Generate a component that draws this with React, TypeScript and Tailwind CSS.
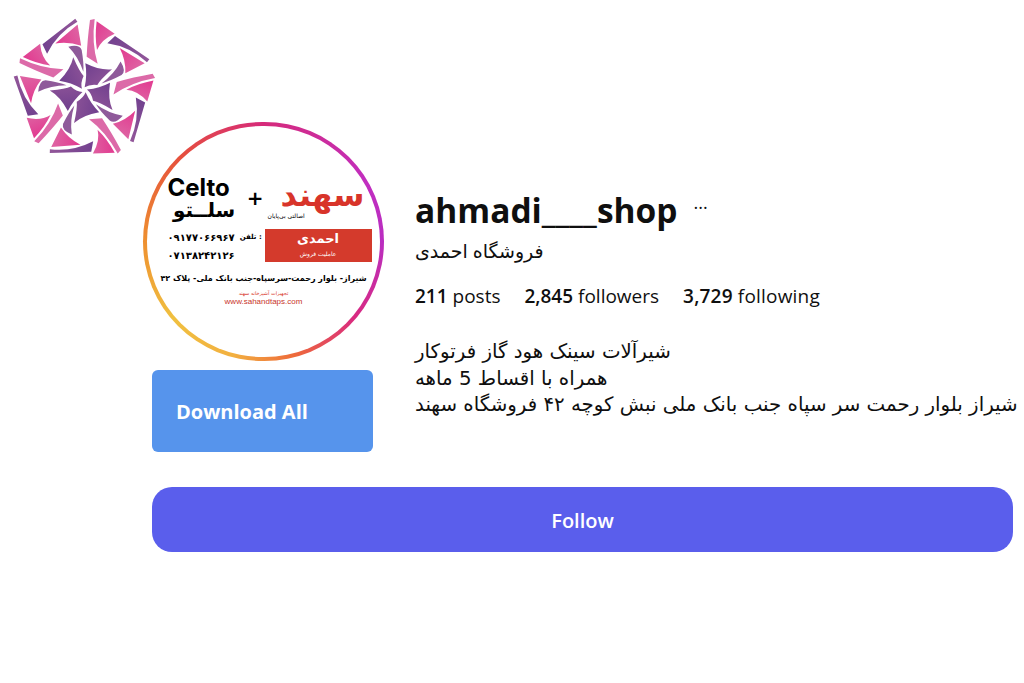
function Logo() {
  return (
    <svg viewBox="0 0 510 510" className="absolute left-0 top-0 w-[170px] h-[170px]">
      <defs>
        <linearGradient id="pk" x1="0" y1="0" x2="1" y2="1">
          <stop offset="0" stopColor="#e2388f" />
          <stop offset="1" stopColor="#dd6fa8" />
        </linearGradient>
        <linearGradient id="pp" x1="0" y1="0" x2="1" y2="1">
          <stop offset="0" stopColor="#6f3f8e" />
          <stop offset="1" stopColor="#94589a" />
        </linearGradient>
      </defs>
      {[0, 1, 2, 3, 4].map((i) => (
        <g key={i} transform={`rotate(${i * 72} 253 270)`}>
          <path d="M270 60 L284 57 Q274 130 293 191 L260 170 Q262 120 270 60Z" fill="#dc6aa8" />
          <path d="M290 64 L344 101 Q304 118 291 150 Q284 110 290 64Z" fill="url(#pk)" />
          <path d="M345 108 L448 178 L441 187 Q390 140 322 130Z" fill="url(#pp)" />
          <path d="M359 144 L434 190 L376 220 Q378 180 359 144Z" fill="url(#pk)" />
          <path d="M254 262 Q262 225 256 190 Q300 212 336 208 Q300 240 292 255 Q270 252 254 262Z" fill="url(#pp)" />
          <path d="M205 140 Q238 132 245 150 Q252 190 250 215 Q235 170 205 140Z" fill="#8f5a9a" />
        </g>
      ))}
      <circle cx="253" cy="270" r="5" fill="#fff" />
    </svg>
  );
}

function Avatar() {
  return (
    <div className="w-[241px] h-[239px] rounded-full p-1 bg-[conic-gradient(#d62a7a,#c12ec0_60deg,#b92dc0_90deg,#d92a80_130deg,#ee6a3a_165deg,#f2b040_195deg,#f0c040_230deg,#ee9030_270deg,#e6503c_315deg,#d62a7a)]">
      <div className="w-full h-full rounded-full bg-white overflow-hidden pt-[52px] flex flex-col items-center text-black font-['DejaVu_Sans',sans-serif]">
        <div className="w-[204px] ml-[12px] flex items-start justify-between">
          <div className="flex flex-col w-[76px]">
            <span className="text-[24px] leading-[20px] font-bold font-['Inter',sans-serif]">Celto</span>
            <span className="text-[20px] leading-[24px] font-bold text-center">سلــتو</span>
          </div>
          <span className="mt-[9px] ml-[6px] text-[20px] leading-[22px] font-bold">+</span>
          <div className="flex flex-col items-end w-[112px]">
            <span className="w-[98px] text-center text-[32px] leading-[34px] font-bold text-[#d8342a]">سهند</span>
            <span className="w-full pl-[4px] text-left text-[6px] leading-[8px]">اصالتی بی‌پایان</span>
          </div>
        </div>
        <div className="w-[204px] ml-[12px] mt-[7px] flex items-start justify-between">
          <div className="flex gap-[5px] pt-[2px]">
            <div className="flex flex-col gap-[5px] text-[10px] leading-[13px] font-bold">
              <span>۰۹۱۷۷۰۶۶۹۶۷</span>
              <span>۰۷۱۳۸۲۴۲۱۲۶</span>
            </div>
            <span className="text-[7px] leading-[13px] font-bold">تلفن :</span>
          </div>
          <div className="w-[107px] h-[33px] bg-[#d43a2c] flex flex-col items-center text-white">
            <span className="text-[13px] leading-[20px] font-bold">احمدی</span>
            <span className="text-[6px] leading-[10px]">عاملیت فروش</span>
          </div>
        </div>
        <div className="mt-[11px] whitespace-nowrap text-[8px] leading-[12px] font-bold">شیراز- بلوار رحمت-سرسپاه-جنب بانک ملی- پلاک ۴۲</div>
        <div className="mt-[5px] text-[5px] leading-[7px] text-[#d8342a]">تجهیزات آشپزخانه سهند</div>
        <div className="text-[8px] leading-[10px] text-[#c8342a] font-['Liberation_Sans',sans-serif]">www.sahandtaps.com</div>
      </div>
    </div>
  );
}

export default function App() {
  return (
    <div className="relative w-[1024px] h-[683px] overflow-hidden bg-white text-[#0f0f0f] font-['Open_Sans','DejaVu_Sans',sans-serif]">
      <Logo />
      <div className="pt-[122px] pl-[143px]">
        <div className="flex">
          <div className="w-[241px] shrink-0">
            <Avatar />
            <button className="ml-[9px] mt-[9px] w-[221px] h-[82px] rounded-md bg-[#5694ec] text-white text-left pl-6 pt-[2px] text-[20px] font-bold">
              Download All
            </button>
          </div>
          <div className="ml-[31px] pt-[65px]">
            <div className="flex items-start">
              <h1 className="text-[33.5px] leading-[46px] font-bold">ahmadi____shop</h1>
              <span className="ml-4 mt-[3px] text-[18px] leading-[24px]">...</span>
            </div>
            <div className="mt-[5px] text-[19px] leading-[27px] w-fit" dir="rtl">فروشگاه احمدی</div>
            <div className="mt-[18px] flex gap-[24px] text-[19px] leading-[27px]">
              <span><span className="font-semibold">211</span> posts</span>
              <span><span className="font-semibold">2,845</span> followers</span>
              <span className="tracking-[0.2px]"><span className="font-semibold">3,729</span> following</span>
            </div>
            <div className="mt-[29px] text-[19.8px] leading-[26.5px] font-['DejaVu_Sans',sans-serif]">
              <div className="w-fit whitespace-nowrap" dir="rtl">شیرآلات سینک هود گاز فرتوکار</div>
              <div className="w-fit whitespace-nowrap" dir="rtl">همراه با اقساط 5 ماهه</div>
              <div className="w-fit whitespace-nowrap" dir="rtl">آدرس: شیراز بلوار رحمت سر سپاه جنب بانک ملی نبش کوچه ۴۲ فروشگاه سهند</div>
            </div>
          </div>
        </div>
        <button className="block ml-[9px] mt-[35px] pt-[2px] w-[861px] h-[65px] rounded-[20px] bg-[#5a5eec] text-white text-[20px] font-semibold">
          Follow
        </button>
      </div>
    </div>
  );
}
